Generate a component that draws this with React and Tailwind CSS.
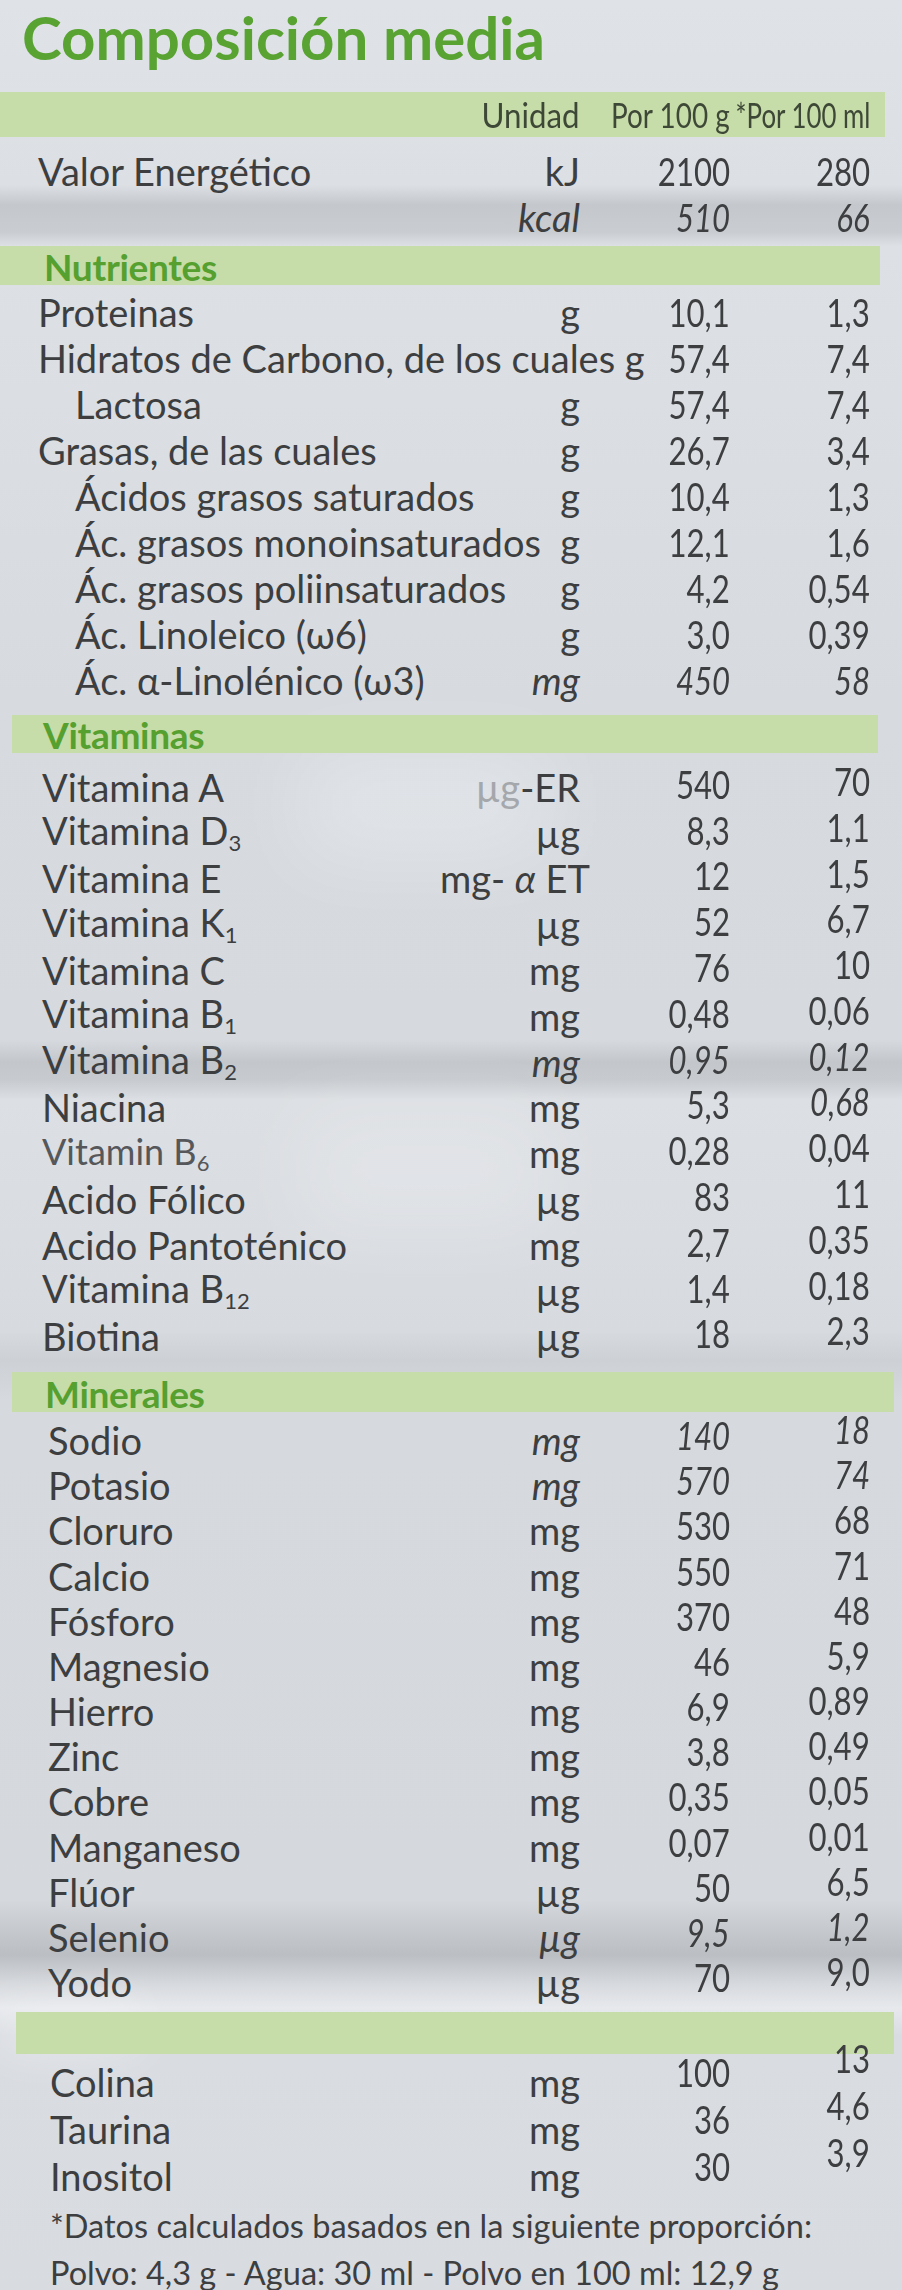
import React from "react";

const FONT = { fontFamily: "Lato, 'Open Sans', sans-serif" };

const nutrientes = [
  { name: "Proteinas", unit: "g", v1: "10,1", v2: "1,3" },
  { name: "Hidratos de Carbono, de los cuales g", unit: "", v1: "57,4", v2: "7,4" },
  { name: "Lactosa", unit: "g", v1: "57,4", v2: "7,4", sub: true },
  { name: "Grasas, de las cuales", unit: "g", v1: "26,7", v2: "3,4" },
  { name: "Ácidos grasos saturados", unit: "g", v1: "10,4", v2: "1,3", sub: true },
  { name: "Ác. grasos monoinsaturados", unit: "g", v1: "12,1", v2: "1,6", sub: true },
  { name: "Ác. grasos poliinsaturados", unit: "g", v1: "4,2", v2: "0,54", sub: true },
  { name: "Ác. Linoleico (ω6)", unit: "g", v1: "3,0", v2: "0,39", sub: true },
  { name: "Ác. α-Linolénico (ω3)", unit: "mg", v1: "450", v2: "58", sub: true, it: true },
];

const Sub = ({ children }) => (
  <span className="text-[22px] align-[-6px]">{children}</span>
);

const vitaminas = [
  {
    name: "Vitamina A",
    unit: (
      <>
        <span className="text-[#a4a7ab]">µg</span>-ER
      </>
    ),
    v1: "540",
    v2: "70",
  },
  { name: <>Vitamina D<Sub>3</Sub></>, unit: "µg", v1: "8,3", v2: "1,1" },
  {
    name: "Vitamina E",
    unit: (
      <>
        mg- <span className="italic">α</span> ET
      </>
    ),
    v1: "12",
    v2: "1,5",
    wideUnit: true,
  },
  { name: <>Vitamina K<Sub>1</Sub></>, unit: "µg", v1: "52", v2: "6,7" },
  { name: "Vitamina C", unit: "mg", v1: "76", v2: "10" },
  { name: <>Vitamina B<Sub>1</Sub></>, unit: "mg", v1: "0,48", v2: "0,06" },
  { name: <>Vitamina B<Sub>2</Sub></>, unit: "mg", v1: "0,95", v2: "0,12", it: true },
  { name: "Niacina", unit: "mg", v1: "5,3", v2: "0,68", it2: true },
  { name: <>Vitamin B<Sub>6</Sub></>, unit: "mg", v1: "0,28", v2: "0,04", light: true },
  { name: "Acido Fólico", unit: "µg", v1: "83", v2: "11" },
  { name: "Acido Pantoténico", unit: "mg", v1: "2,7", v2: "0,35" },
  { name: <>Vitamina B<Sub>12</Sub></>, unit: "µg", v1: "1,4", v2: "0,18" },
  { name: "Biotina", unit: "µg", v1: "18", v2: "2,3" },
];

const minerales = [
  { name: "Sodio", unit: "mg", v1: "140", v2: "18", it: true },
  { name: "Potasio", unit: "mg", v1: "570", v2: "74", it: true },
  { name: "Cloruro", unit: "mg", v1: "530", v2: "68" },
  { name: "Calcio", unit: "mg", v1: "550", v2: "71" },
  { name: "Fósforo", unit: "mg", v1: "370", v2: "48" },
  { name: "Magnesio", unit: "mg", v1: "46", v2: "5,9" },
  { name: "Hierro", unit: "mg", v1: "6,9", v2: "0,89" },
  { name: "Zinc", unit: "mg", v1: "3,8", v2: "0,49" },
  { name: "Cobre", unit: "mg", v1: "0,35", v2: "0,05" },
  { name: "Manganeso", unit: "mg", v1: "0,07", v2: "0,01" },
  { name: "Flúor", unit: "µg", v1: "50", v2: "6,5" },
  { name: "Selenio", unit: "µg", v1: "9,5", v2: "1,2", it: true },
  { name: "Yodo", unit: "µg", v1: "70", v2: "9,0" },
];

const otros = [
  { name: "Colina", unit: "mg", v1: "100", v2: "13" },
  { name: "Taurina", unit: "mg", v1: "36", v2: "4,6" },
  { name: "Inositol", unit: "mg", v1: "30", v2: "3,9" },
];

const Num = ({ children, italic }) => (
  <span
    className={
      "inline-block origin-right scale-x-[0.82] " + (italic ? "italic" : "")
    }
  >
    {children}
  </span>
);

const Row = ({ row, height, pl, lift1 = "", lift2 = "" }) => (
  <div
    className={"flex items-center whitespace-nowrap text-[38px] leading-none text-[#3d3e40] pr-[32px] " + height}
  >
    <div
      className={
        "flex-1 min-w-0 " + (row.sub ? "pl-[75px] " : pl) + (row.light ? " text-[#55575a] text-[36px]" : "")
      }
    >
      {row.name}
    </div>
    <div
      className={
        "flex justify-end shrink-0 " +
        (row.wideUnit ? "w-[130px] -mr-[10px]" : "w-[120px]") +
        (row.it ? " italic" : "")
      }
    >
      <span>{row.unit}</span>
    </div>
    <div className={"flex justify-end w-[150px] shrink-0 " + (row.wideUnit ? "pl-[10px] " : "") + lift1}>
      <Num italic={row.it}>{row.v1}</Num>
    </div>
    <div className={"flex justify-end w-[140px] shrink-0 " + lift2}>
      <Num italic={row.it || row.it2}>{row.v2}</Num>
    </div>
  </div>
);

const Band = ({ children, cls }) => (
  <div className={"bg-[#c6dca9] flex items-end " + cls}>
    {children && (
      <span className="text-[37px] font-bold leading-none text-[#55a02f] tracking-[-0.3px]">
        {children}
      </span>
    )}
  </div>
);

export default function App() {
  return (
    <div
      style={FONT}
      className="relative h-[2290px] w-[902px] overflow-hidden bg-[linear-gradient(180deg,#dfe2e7_0px,#dcdfe4_185px,#c4c7cc_205px,#c9ccd1_232px,#dde0e4_246px,#d7dbe0_700px,#d6dadf_1040px,#c3c7cc_1062px,#c7cbd0_1080px,#dcdfe3_1100px,#d7dbe0_1330px,#cdd1d6_1360px,#d6dadf_1400px,#d5d9de_1900px,#c3c6cb_1935px,#bbbec3_1955px,#d7dade_1985px,#e7e9ed_2008px,#d9dce1_2035px,#d8dbe0_2290px)]"
    >
      {/* glare */}
      <div className="pointer-events-none absolute left-[300px] top-[750px] h-[110px] w-[250px] bg-white/25 blur-2xl" />
      <div className="pointer-events-none absolute left-[300px] top-[1110px] h-[120px] w-[250px] bg-white/20 blur-2xl" />
      <div className="pointer-events-none absolute left-0 top-[2010px] h-[40px] w-[140px] bg-white/40 blur-xl" />

      <div className="relative">
        <h1 className="pl-[22px] text-[60px] font-bold leading-[74px] text-[#58a331]">
          Composición media
        </h1>

        {/* header */}
        <div className="mt-[18px] mr-[17px] flex h-[45px] items-center whitespace-nowrap bg-[#c6dca9] pr-[15px] text-[34px] leading-none text-[#3e4836]">
          <div className="flex-1" />
          <div className="flex w-[120px] justify-end">
            <span className="inline-block origin-right scale-x-[0.92]">Unidad</span>
          </div>
          <div className="flex w-[150px] justify-end">
            <span className="inline-block origin-right scale-x-[0.82]">Por 100 g</span>
          </div>
          <div className="flex w-[140px] justify-end">
            <span className="inline-block shrink-0 origin-right scale-x-[0.76]">*Por 100 ml</span>
          </div>
        </div>

        {/* energy */}
        <div className="mt-[11px]">
          <Row
            row={{ name: "Valor Energético", unit: "kJ", v1: "2100", v2: "280" }}
            height="h-[46px]"
            pl="pl-[38px]"
          />
          <Row
            row={{ name: "", unit: "kcal", v1: "510", v2: "66", it: true }}
            height="h-[46px]"
            pl="pl-[38px]"
          />
        </div>

        <Band cls="mt-[6px] mr-[22px] h-[39px] pl-[44px]">Nutrientes</Band>
        <div className="mt-[4px]">
          {nutrientes.map((r, i) => (
            <Row key={i} row={r} height="h-[46px]" pl="pl-[38px]" />
          ))}
        </div>

        <Band cls="mt-[12px] ml-[12px] mr-[24px] h-[38px] pl-[31px]">Vitaminas</Band>
        <div className="mt-[11px]">
          {vitaminas.map((r, i) => (
            <Row key={i} row={r} height="h-[45.8px]" pl="pl-[42px]" lift1="pb-[6px]" lift2="pb-[12px]" />
          ))}
        </div>

        <Band cls="mt-[13px] ml-[12px] mr-[8px] h-[40px] pl-[33px]">Minerales</Band>
        <div className="mt-[5px]">
          {minerales.map((r, i) => (
            <Row key={i} row={r} height="h-[45.2px]" pl="pl-[48px]" lift1="pb-[10px]" lift2="pb-[22px]" />
          ))}
        </div>

        <Band cls="mt-[7px] ml-[16px] mr-[8px] h-[42px]" />
        <div className="mt-[5px]">
          {otros.map((r, i) => (
            <Row key={i} row={r} height="h-[47px]" pl="pl-[50px]" lift1="pb-[20px]" lift2="pb-[48px]" />
          ))}
        </div>

        <div className="mt-[2px] pl-[50px] text-[32.5px] leading-[47px] text-[#3d3e40] whitespace-nowrap">
          <p>*Datos calculados basados en la siguiente proporción:</p>
          <p>Polvo: 4,3 g - Agua: 30 ml - Polvo en 100 ml: 12,9 g</p>
        </div>
      </div>
    </div>
  );
}
